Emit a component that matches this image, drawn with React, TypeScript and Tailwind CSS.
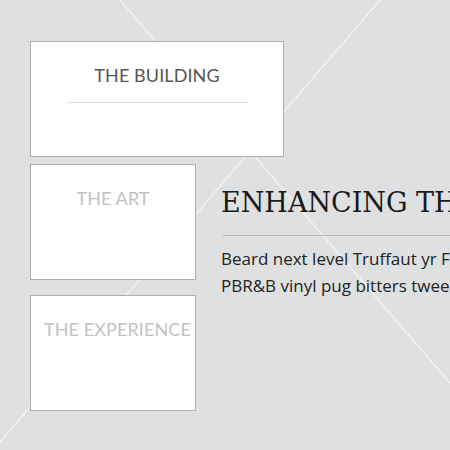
const sans = { fontFamily: '"Lato", "Open Sans", sans-serif' };

function Card({ title, tone, wide, divider }: { title: string; tone: string; wide?: boolean; divider?: boolean }) {
  return (
    <div
      className={`shrink-0 h-[116px] bg-white border border-[#adafb1] flex flex-col items-center pt-[22px] ${wide ? "w-[254px]" : "w-[166px]"}`}
    >
      <div className={`text-[18px] leading-[22px] whitespace-nowrap tracking-[0.1px] ${tone}`} style={sans}>
        {title}
      </div>
      {divider && <div className="mt-[16px] w-[181px] h-px bg-[#dcdcdc]" />}
    </div>
  );
}

export default function App() {
  return (
    <div className="relative w-[450px] h-[450px] overflow-hidden bg-[#dfe0e1]">
      <svg className="absolute inset-0" width="450" height="450" viewBox="0 0 450 450">
        <line x1="120" y1="0" x2="450" y2="383" stroke="#f4f4f4" strokeWidth="1.2" />
        <line x1="380" y1="0" x2="0" y2="442" stroke="#f4f4f4" strokeWidth="1.2" />
      </svg>

      <div className="relative flex pl-[30px] pt-[41px]">
        <div className="w-[166px] shrink-0 flex flex-col">
          <Card title="THE BUILDING" tone="text-[#555555]" wide divider />
          <div className="mt-[7px]">
            <Card title="THE ART" tone="text-[#c2c2c2]" />
          </div>
          <div className="mt-[15px]">
            <Card title="THE EXPERIENCE" tone="text-[#c2c2c2] pl-[9px]" />
          </div>
        </div>

        <div className="ml-[25px] mt-[145px] shrink-0 w-[420px]">
          <h1
            className="text-[27px] leading-[34px] text-[#1a1a1a] whitespace-nowrap"
            style={{ fontFamily: '"DejaVu Serif", serif' }}
          >
            ENHANCING THE EXPERIENCE
          </h1>
          <div className="mt-[15px] ml-[2px] h-px bg-[#b9babb]" />
          <p
            className="mt-[9px] text-[17px] leading-[27px] text-[#222222] whitespace-nowrap"
            style={{ fontFamily: '"Open Sans", "Lato", sans-serif' }}
          >
            Beard next level Truffaut yr Four Loko,
            <br />
            PBR&amp;B vinyl pug bitters tweed mlkshk.
          </p>
        </div>
      </div>
    </div>
  );
}
